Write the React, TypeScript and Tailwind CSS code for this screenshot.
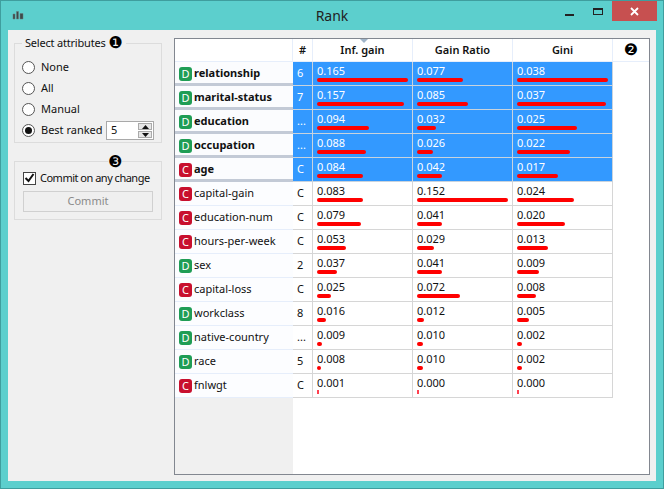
const font = "font-['Noto_Sans',sans-serif]";

type Row = {
  name: string;
  kind: "D" | "C";
  count: string;
  info: string;
  gain: string;
  gini: string;
  selected?: boolean;
};

const rows: Row[] = [
  { name: "relationship", kind: "D", count: "6", info: "0.165", gain: "0.077", gini: "0.038", selected: true },
  { name: "marital-status", kind: "D", count: "7", info: "0.157", gain: "0.085", gini: "0.037", selected: true },
  { name: "education", kind: "D", count: "...", info: "0.094", gain: "0.032", gini: "0.025", selected: true },
  { name: "occupation", kind: "D", count: "...", info: "0.088", gain: "0.026", gini: "0.022", selected: true },
  { name: "age", kind: "C", count: "C", info: "0.084", gain: "0.042", gini: "0.017", selected: true },
  { name: "capital-gain", kind: "C", count: "C", info: "0.083", gain: "0.152", gini: "0.024" },
  { name: "education-num", kind: "C", count: "C", info: "0.079", gain: "0.041", gini: "0.020" },
  { name: "hours-per-week", kind: "C", count: "C", info: "0.053", gain: "0.029", gini: "0.013" },
  { name: "sex", kind: "D", count: "2", info: "0.037", gain: "0.041", gini: "0.009" },
  { name: "capital-loss", kind: "C", count: "C", info: "0.025", gain: "0.072", gini: "0.008" },
  { name: "workclass", kind: "D", count: "8", info: "0.016", gain: "0.012", gini: "0.005" },
  { name: "native-country", kind: "D", count: "...", info: "0.009", gain: "0.010", gini: "0.002" },
  { name: "race", kind: "D", count: "5", info: "0.008", gain: "0.010", gini: "0.002" },
  { name: "fnlwgt", kind: "C", count: "C", info: "0.001", gain: "0.000", gini: "0.000" },
];

function Radio({ label, checked }: { label: string; checked?: boolean }) {
  return (
    <div className="flex items-center gap-[6px] h-[21px]">
      <span className="w-[13px] h-[13px] rounded-full border border-[#555] bg-white flex items-center justify-center">
        {checked && <span className="w-[7px] h-[7px] rounded-full bg-[#111]" />}
      </span>
      <span>{label}</span>
    </div>
  );
}

function ScoreCell({ value, max, selected }: { value: string; max: number; selected?: boolean }) {
  const v = parseFloat(value);
  const width = Math.max(2, (v / max) * 91);
  return (
    <div className={`w-[100px] h-[24px] border-r border-b px-1 pt-[1px] ${selected ? "border-[#c9d3dd]" : "border-[#d6d6d6]"}`}>
      <div className="h-[15px] leading-[15px]">{value}</div>
      <div
        className={`h-[4px] rounded-full ${v < 0.002 ? "bg-[#ff4050] rounded-none" : "bg-[#ff0000]"}`}
        style={{ width }}
      />
    </div>
  );
}

export default function App() {
  return (
    <div className={`${font} w-[664px] h-[489px] bg-[#5ccfcd] border border-[#3f9e9e] flex flex-col text-[11px] text-[#111] overflow-hidden`}>
      {/* Title bar */}
      <div className="h-[29px] flex shrink-0">
        <div className="w-[120px] pl-[11px] pt-[10px]">
          <svg width="12" height="9" viewBox="0 0 12 9">
            <path d="M1 3h2v5H1zM4.500 0.500h2v7.500h-2zM8 2.500h3v5.500H8z" fill="#3b4a4a" stroke="#6b7a7a" strokeWidth="0.5" />
          </svg>
        </div>
        <div className="flex-1 text-center text-[14px] leading-[29px] text-[#222]">Rank</div>
        <div className="w-[120px] flex justify-end items-start">
          <div className="w-[20px] h-[20px] flex items-end justify-center pb-[5px]">
            <span className="w-[9px] h-[2px] bg-[#222]" />
          </div>
          <div className="w-[26px] h-[20px] flex items-start justify-center pt-[7px] ml-[6px]">
            <span className="w-[10px] h-[7px] border border-t-2 border-[#222]" />
          </div>
          <div className="w-[45px] h-[20px] ml-[1px] mr-[6px] bg-[#c75050] flex items-center justify-center">
            <svg width="9" height="9" viewBox="0 0 9 9">
              <path d="M1 1l7 7M8 1l-7 7" stroke="#fff" strokeWidth="1.8" />
            </svg>
          </div>
        </div>
      </div>

      {/* Window body */}
      <div className="mx-[7px] h-[451px] bg-[#f0f0f0] flex pl-[6px] pr-[6px] pt-[8px] pb-[6px] gap-[12px]">
        {/* Controls */}
        <div className="w-[148px] shrink-0 flex flex-col gap-[11px]">
          <fieldset className="min-w-0 border border-[#dcdcdc] h-[107px] pl-[7px] pr-[7px] -mt-[2px]">
            <legend className="px-[3px] h-[14px] leading-[14px] flex items-center gap-[3px] tracking-[-0.2px]">
              Select attributes
              <span className="font-['DejaVu_Sans',sans-serif] text-[16px] text-black">❶</span>
            </legend>
            <div className="pt-[7px]">
              <Radio label="None" />
              <Radio label="All" />
              <Radio label="Manual" />
              <div className="flex items-center justify-between">
                <Radio label="Best ranked" checked />
                <div className="w-[48px] h-[19px] border border-[#a9a9a9] bg-white flex justify-between items-center pl-[4px] pr-[1px]">
                  <span>5</span>
                  <div className="w-[14px] h-[15px] flex flex-col gap-px">
                    <span className="flex-1 bg-[#e6e6e6] border border-[#aaa] flex items-center justify-center">
                      <svg width="7" height="4" viewBox="0 0 7 4"><path d="M3.500 0L7 4H0z" fill="#111" /></svg>
                    </span>
                    <span className="flex-1 bg-[#e6e6e6] border border-[#aaa] flex items-center justify-center">
                      <svg width="7" height="4" viewBox="0 0 7 4"><path d="M0 0h7L3.500 4z" fill="#111" /></svg>
                    </span>
                  </div>
                </div>
              </div>
            </div>
          </fieldset>

          <fieldset className="min-w-0 border border-[#dcdcdc] h-[66px] px-[8px]">
            <legend className="ml-[85px] px-0 h-[14px] leading-[16px] font-['DejaVu_Sans',sans-serif] text-[16px] text-black">❸</legend>
            <div className="flex items-center gap-[4px] h-[16px] mt-[2px]">
              <span className="w-[13px] h-[13px] border border-[#444] bg-white flex items-center justify-center">
                <svg width="11" height="10" viewBox="0 0 11 10">
                  <path d="M1.500 5l3 3 5-7" fill="none" stroke="#111" strokeWidth="2" />
                </svg>
              </span>
              <span className="whitespace-nowrap tracking-[-0.5px]">Commit on any change</span>
            </div>
            <div className="mt-[5px] h-[21px] w-[130px] border border-[#d0d0d0] bg-[#efefef] text-[#8a8a8a] flex items-center justify-center">
              Commit
            </div>
          </fieldset>
        </div>

        {/* Rank table */}
        <div className="w-[477px] h-[437px] border border-[#828790] bg-white flex flex-col">
          <div className="flex h-[23px] font-semibold shrink-0">
            <div className="w-[118px] border-r border-b border-[#e6eefb]" />
            <div className="w-[20px] border-r border-b border-[#e6eefb] flex items-center justify-center">#</div>
            <div className="relative w-[100px] border-r border-b border-[#e6eefb] flex items-center justify-center">
              <span className="absolute top-0 left-[47px] w-0 h-0 border-x-[4px] border-x-transparent border-t-[4px] border-t-[#a0b4c8]" />
              Inf. gain
            </div>
            <div className="w-[100px] border-r border-b border-[#e6eefb] flex items-center justify-center">Gain Ratio</div>
            <div className="w-[100px] border-r border-b border-[#e6eefb] flex items-center justify-center">Gini</div>
            <div className="flex-1 flex items-center justify-center border-b border-[#e6eefb] font-normal font-['DejaVu_Sans',sans-serif] text-[16px] text-black">❷</div>
          </div>

          <div className="flex-1 flex min-h-0">
            <div className="flex flex-col">
              <div>
                {rows.map((r) => (
                  <div
                    key={r.name}
                    className={`w-[118px] h-[24px] flex items-center gap-[2px] pl-[4px] ${
                      r.selected
                        ? "font-bold bg-[#fbfcfe] border-b-[3px] border-[#c3cad6] pt-[2px]"
                        : "bg-[#fcfdff] border-b border-[#e6eefb]"
                    }`}
                  >
                    <span
                      className={`w-[13px] h-[14px] rounded-[3px] text-white text-[11px] leading-[14px] font-normal text-center ${
                        r.kind === "D" ? "bg-[#1f9d55]" : "bg-[#c8102e]"
                      }`}
                    >
                      {r.kind}
                    </span>
                    <span>{r.name}</span>
                  </div>
                ))}
              </div>
              <div className="flex-1 bg-[#f0f0f0]" />
            </div>

            <div>
              {rows.map((r) => (
                <div key={r.name} className={`flex ${r.selected ? "bg-[#3399ff] text-white" : ""}`}>
                  <div
                    className={`w-[20px] h-[24px] border-r border-b flex items-center pl-[4px] ${
                      r.selected ? "border-[#c9d3dd]" : "border-[#d6d6d6]"
                    }`}
                  >
                    {r.count}
                  </div>
                  <ScoreCell value={r.info} max={0.165} selected={r.selected} />
                  <ScoreCell value={r.gain} max={0.152} selected={r.selected} />
                  <ScoreCell value={r.gini} max={0.038} selected={r.selected} />
                </div>
              ))}
            </div>
          </div>
        </div>
      </div>
    </div>
  );
}
